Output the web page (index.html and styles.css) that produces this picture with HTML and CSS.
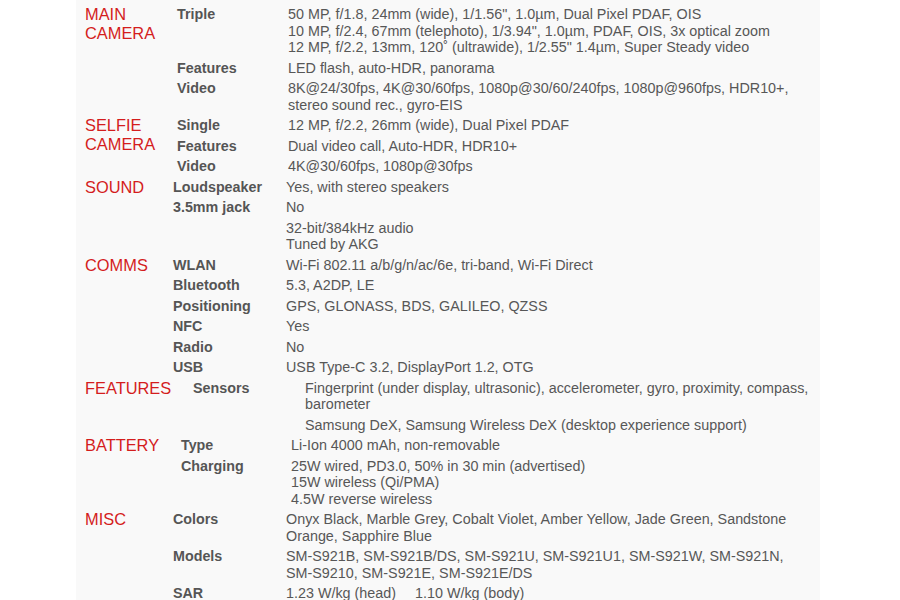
FILE: index.html
```html
<!DOCTYPE html>
<html lang="en">
<head>
<meta charset="utf-8">
<title>Specs</title>
<link rel="stylesheet" href="styles.css">
</head>
<body>
<div class="panel">
  <section class="sec s-main">
    <h2 class="head">MAIN<br>CAMERA</h2>
    <div class="rows">
      <div class="row"><div class="lbl">Triple</div><div class="val">50 MP, f/1.8, 24mm (wide), 1/1.56", 1.0µm, Dual Pixel PDAF, OIS<br>10 MP, f/2.4, 67mm (telephoto), 1/3.94", 1.0µm, PDAF, OIS, 3x optical zoom<br>12 MP, f/2.2, 13mm, 120˚ (ultrawide), 1/2.55" 1.4µm, Super Steady video</div></div>
      <div class="row"><div class="lbl">Features</div><div class="val">LED flash, auto-HDR, panorama</div></div>
      <div class="row"><div class="lbl">Video</div><div class="val">8K@24/30fps, 4K@30/60fps, 1080p@30/60/240fps, 1080p@960fps, HDR10+, stereo sound rec., gyro-EIS</div></div>
    </div>
  </section>
  <section class="sec s-main">
    <h2 class="head">SELFIE<br>CAMERA</h2>
    <div class="rows">
      <div class="row"><div class="lbl">Single</div><div class="val">12 MP, f/2.2, 26mm (wide), Dual Pixel PDAF</div></div>
      <div class="row"><div class="lbl">Features</div><div class="val">Dual video call, Auto-HDR, HDR10+</div></div>
      <div class="row"><div class="lbl">Video</div><div class="val">4K@30/60fps, 1080p@30fps</div></div>
    </div>
  </section>
  <section class="sec s-sound">
    <h2 class="head">SOUND</h2>
    <div class="rows">
      <div class="row"><div class="lbl">Loudspeaker</div><div class="val">Yes, with stereo speakers</div></div>
      <div class="row"><div class="lbl">3.5mm jack</div><div class="val">No</div></div>
      <div class="row"><div class="lbl"></div><div class="val">32-bit/384kHz audio<br>Tuned by AKG</div></div>
    </div>
  </section>
  <section class="sec s-sound">
    <h2 class="head">COMMS</h2>
    <div class="rows">
      <div class="row"><div class="lbl">WLAN</div><div class="val">Wi-Fi 802.11 a/b/g/n/ac/6e, tri-band, Wi-Fi Direct</div></div>
      <div class="row"><div class="lbl">Bluetooth</div><div class="val">5.3, A2DP, LE</div></div>
      <div class="row"><div class="lbl">Positioning</div><div class="val">GPS, GLONASS, BDS, GALILEO, QZSS</div></div>
      <div class="row"><div class="lbl">NFC</div><div class="val">Yes</div></div>
      <div class="row"><div class="lbl">Radio</div><div class="val">No</div></div>
      <div class="row"><div class="lbl">USB</div><div class="val">USB Type-C 3.2, DisplayPort 1.2, OTG</div></div>
    </div>
  </section>
  <section class="sec s-feat">
    <h2 class="head">FEATURES</h2>
    <div class="rows">
      <div class="row"><div class="lbl">Sensors</div><div class="val">Fingerprint (under display, ultrasonic), accelerometer, gyro, proximity, compass, barometer</div></div>
      <div class="row"><div class="lbl"></div><div class="val">Samsung DeX, Samsung Wireless DeX (desktop experience support)</div></div>
    </div>
  </section>
  <section class="sec s-batt">
    <h2 class="head">BATTERY</h2>
    <div class="rows">
      <div class="row"><div class="lbl">Type</div><div class="val">Li-Ion 4000 mAh, non-removable</div></div>
      <div class="row"><div class="lbl">Charging</div><div class="val">25W wired, PD3.0, 50% in 30 min (advertised)<br>15W wireless (Qi/PMA)<br>4.5W reverse wireless</div></div>
    </div>
  </section>
  <section class="sec s-sound">
    <h2 class="head">MISC</h2>
    <div class="rows">
      <div class="row"><div class="lbl">Colors</div><div class="val">Onyx Black, Marble Grey, Cobalt Violet, Amber Yellow, Jade Green, Sandstone Orange, Sapphire Blue</div></div>
      <div class="row"><div class="lbl">Models</div><div class="val"><span class="nb">SM-S921B,</span> <span class="nb">SM-S921B/DS,</span> <span class="nb">SM-S921U,</span> <span class="nb">SM-S921U1,</span> <span class="nb">SM-S921W,</span> <span class="nb">SM-S921N,</span> <span class="nb">SM-S9210,</span> <span class="nb">SM-S921E,</span> <span class="nb">SM-S921E/DS</span></div></div>
      <div class="row"><div class="lbl">SAR</div><div class="val">1.23 W/kg (head) <span class="gap">1.10 W/kg (body)</span></div></div>
    </div>
  </section>
</div>
</body>
</html>
```

FILE: styles.css
```css
html, body {
  margin: 0;
  padding: 0;
  background: #ffffff;
}
body {
  font-family: "Liberation Sans", Arial, sans-serif;
  height: 600px;
  overflow: hidden;
}
.panel {
  margin-left: 76px;
  width: 744px;
  min-height: 600px;
  background: #f9f9f9;
  box-sizing: border-box;
  padding: 4px 6px 0 9px;
}
.sec {
  display: flex;
  --hw: 92px;
  --lw: 111px;
}
.s-main { --hw: 92px; --lw: 111px; }
.s-sound { --hw: 88px; --lw: 113px; }
.s-feat { --hw: 108px; --lw: 112px; }
.s-batt { --hw: 96px; --lw: 110px; }
.head {
  flex: 0 0 var(--hw);
  margin: 0;
  padding-top: 1px;
  font-size: 16.4px;
  font-weight: normal;
  line-height: 18.5px;
  color: #d41d1d;
}
.rows {
  flex: 1;
  min-width: 0;
}
.row {
  display: flex;
  padding: 2px 0;
  font-size: 14.35px;
  line-height: 16.5px;
  color: #555;
}
.lbl {
  flex: 0 0 var(--lw);
  font-weight: bold;
  font-size: 14.3px;
  color: #555;
}
.val {
  flex: 1;
  min-width: 0;
  color: #575757;
}
.nb {
  white-space: nowrap;
}
.gap {
  margin-left: 15px;
}
```
